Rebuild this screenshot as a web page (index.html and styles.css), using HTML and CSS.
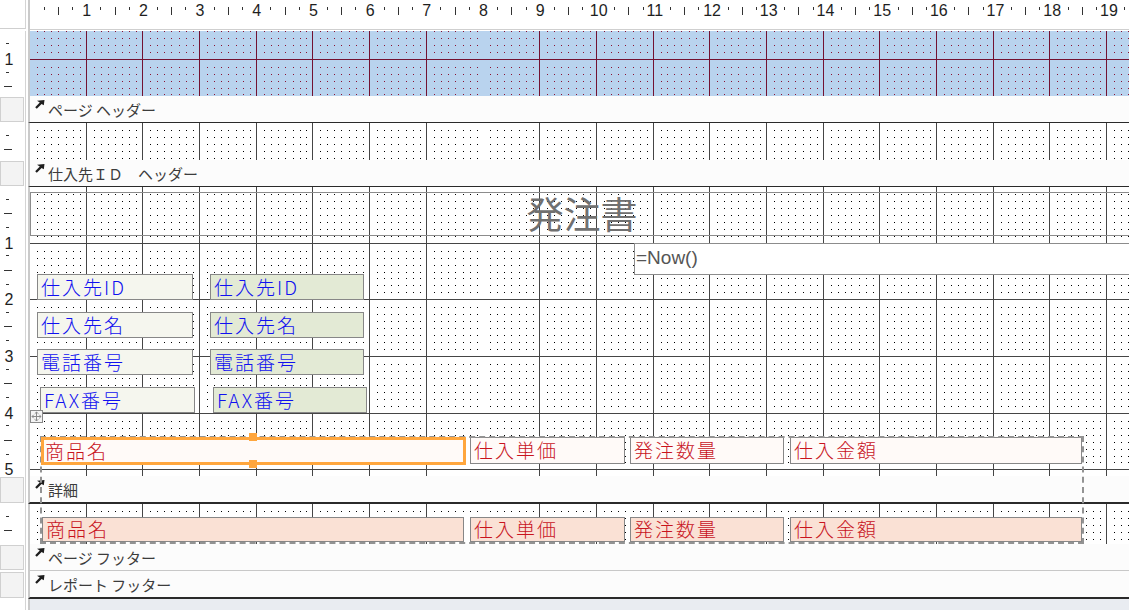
FILE: index.html
```html
<!DOCTYPE html>
<html lang="ja">
<head>
    <meta charset="UTF-8">
    <title>発注書 - デザイン ビュー</title>
    <link rel="stylesheet" href="styles.css">
</head>
<body>

<div class="designer">

    <!-- horizontal ruler -->
    <div class="row top">
        <div class="gut corner"></div>
        <div class="sec">
            <div class="hruler">
                <div class="cm"><span class="q"></span><span class="q s"></span><span class="q m"></span><span class="q s"></span></div>
                <div class="cm"><span class="q n">1</span><span class="q s"></span><span class="q m"></span><span class="q s"></span></div>
                <div class="cm"><span class="q n">2</span><span class="q s"></span><span class="q m"></span><span class="q s"></span></div>
                <div class="cm"><span class="q n">3</span><span class="q s"></span><span class="q m"></span><span class="q s"></span></div>
                <div class="cm"><span class="q n">4</span><span class="q s"></span><span class="q m"></span><span class="q s"></span></div>
                <div class="cm"><span class="q n">5</span><span class="q s"></span><span class="q m"></span><span class="q s"></span></div>
                <div class="cm"><span class="q n">6</span><span class="q s"></span><span class="q m"></span><span class="q s"></span></div>
                <div class="cm"><span class="q n">7</span><span class="q s"></span><span class="q m"></span><span class="q s"></span></div>
                <div class="cm"><span class="q n">8</span><span class="q s"></span><span class="q m"></span><span class="q s"></span></div>
                <div class="cm"><span class="q n">9</span><span class="q s"></span><span class="q m"></span><span class="q s"></span></div>
                <div class="cm"><span class="q n">10</span><span class="q s"></span><span class="q m"></span><span class="q s"></span></div>
                <div class="cm"><span class="q n">11</span><span class="q s"></span><span class="q m"></span><span class="q s"></span></div>
                <div class="cm"><span class="q n">12</span><span class="q s"></span><span class="q m"></span><span class="q s"></span></div>
                <div class="cm"><span class="q n">13</span><span class="q s"></span><span class="q m"></span><span class="q s"></span></div>
                <div class="cm"><span class="q n">14</span><span class="q s"></span><span class="q m"></span><span class="q s"></span></div>
                <div class="cm"><span class="q n">15</span><span class="q s"></span><span class="q m"></span><span class="q s"></span></div>
                <div class="cm"><span class="q n">16</span><span class="q s"></span><span class="q m"></span><span class="q s"></span></div>
                <div class="cm"><span class="q n">17</span><span class="q s"></span><span class="q m"></span><span class="q s"></span></div>
                <div class="cm"><span class="q n">18</span><span class="q s"></span><span class="q m"></span><span class="q s"></span></div>
                <div class="cm"><span class="q n">19</span><span class="q s"></span><span class="q m"></span><span class="q s"></span></div>
            </div>
        </div>
    </div>

    <!-- report header (selected section) -->
    <div class="row r-rh">
        <div class="gut">
            <div class="vr vr-rh">
                <span class="vq s"></span><span class="vq n">1</span><span class="vq s"></span><span class="vq m"></span>
            </div>
        </div>
        <div class="sec grid grid-sel"></div>
    </div>

    <!-- page header -->
    <div class="row bar">
        <div class="gut"><div class="gbox"></div></div>
        <div class="sec band edge-dark">
            <svg class="chev" width="10" height="9" viewBox="0 0 10 9"><path d="M2 0.8 9.5 0 8.8 5.2 6.6 4 1.8 8.8 0.2 7.2 4.8 2.6Z" fill="#1e1e1e"/></svg>
            <span>ページ ヘッダー</span>
        </div>
    </div>
    <div class="row r-ph">
        <div class="gut">
            <div class="vr">
                <span class="vq s"></span><span class="vq m"></span>
            </div>
        </div>
        <div class="sec grid"></div>
    </div>

    <!-- group header -->
    <div class="row bar">
        <div class="gut"><div class="gbox"></div></div>
        <div class="sec band edge-dark">
            <svg class="chev" width="10" height="9" viewBox="0 0 10 9"><path d="M2 0.8 9.5 0 8.8 5.2 6.6 4 1.8 8.8 0.2 7.2 4.8 2.6Z" fill="#1e1e1e"/></svg>
            <span>仕入先ＩＤ　ヘッダー</span>
        </div>
    </div>
    <div class="row r-gh">
        <div class="gut">
            <div class="vr">
                <span class="vq s"></span><span class="vq m"></span><span class="vq s"></span><span class="vq n">1</span>
                <span class="vq s"></span><span class="vq m"></span><span class="vq s"></span><span class="vq n">2</span>
                <span class="vq s"></span><span class="vq m"></span><span class="vq s"></span><span class="vq n">3</span>
                <span class="vq s"></span><span class="vq m"></span><span class="vq s"></span><span class="vq n">4</span>
                <span class="vq s"></span><span class="vq m"></span><span class="vq s"></span><span class="vq n">5</span>
            </div>
        </div>
        <div class="sec grid">
            <div class="title">発注書</div>
            <div class="now">=Now()</div>

            <div class="ctl lbl at-l1">仕入先ID</div>
            <div class="ctl txt at-t1">仕入先ID</div>
            <div class="ctl lbl at-l2">仕入先名</div>
            <div class="ctl txt at-t2">仕入先名</div>
            <div class="ctl lbl at-l3">電話番号</div>
            <div class="ctl txt at-t3">電話番号</div>
            <div class="ctl lbl at-l4">FAX番号</div>
            <div class="ctl txt at-t4">FAX番号</div>

            <div class="grip">
                <svg width="11" height="11" viewBox="0 0 11 11"><path d="M5.5 1v9M1 5.5h9M3.8 2.7 5.5 1 7.2 2.7M3.8 8.3 5.5 10 7.2 8.3M2.7 3.8 1 5.5 2.7 7.2M8.3 3.8 10 5.5 8.3 7.2" stroke="#8a8a8a" fill="none"/></svg>
            </div>

            <div class="ctl hd picked at-h1">商品名</div>
            <div class="hdl hdl-top"></div>
            <div class="hdl hdl-bot"></div>
            <div class="ctl hd at-h2">仕入単価</div>
            <div class="ctl hd at-h3">発注数量</div>
            <div class="ctl hd at-h4">仕入金額</div>
        </div>
    </div>

    <!-- detail -->
    <div class="row bar bar-thick">
        <div class="gut"><div class="gbox"></div></div>
        <div class="sec band edge-thick">
            <svg class="chev" width="10" height="9" viewBox="0 0 10 9"><path d="M2 0.8 9.5 0 8.8 5.2 6.6 4 1.8 8.8 0.2 7.2 4.8 2.6Z" fill="#1e1e1e"/></svg>
            <span>詳細</span>
        </div>
    </div>
    <div class="row r-dt">
        <div class="gut">
            <div class="vr">
                <span class="vq s"></span><span class="vq m"></span>
            </div>
        </div>
        <div class="sec grid">
            <div class="ctl dt at-d1">商品名</div>
            <div class="ctl dt at-d2">仕入単価</div>
            <div class="ctl dt at-d3">発注数量</div>
            <div class="ctl dt at-d4">仕入金額</div>
        </div>
    </div>

    <!-- page footer -->
    <div class="row bar">
        <div class="gut"><div class="gbox"></div></div>
        <div class="sec band edge-light">
            <svg class="chev" width="10" height="9" viewBox="0 0 10 9"><path d="M2 0.8 9.5 0 8.8 5.2 6.6 4 1.8 8.8 0.2 7.2 4.8 2.6Z" fill="#1e1e1e"/></svg>
            <span>ページ フッター</span>
        </div>
    </div>

    <!-- report footer -->
    <div class="row bar bar-thick">
        <div class="gut"><div class="gbox"></div></div>
        <div class="sec band edge-thick">
            <svg class="chev" width="10" height="9" viewBox="0 0 10 9"><path d="M2 0.8 9.5 0 8.8 5.2 6.6 4 1.8 8.8 0.2 7.2 4.8 2.6Z" fill="#1e1e1e"/></svg>
            <span>レポート フッター</span>
        </div>
    </div>

    <div class="row rest">
        <div class="gut"></div>
        <div class="sec empty"></div>
    </div>

    <!-- control layout outline (spans group header and detail) -->
    <div class="layout-box"></div>
</div>

</body>
</html>
```

FILE: styles.css
```css
html, body {
    margin: 0;
    padding: 0;
    background: #fff;
    overflow: hidden;
}

.designer {
    position: relative;
    width: 1129px;
    height: 610px;
    display: flex;
    flex-direction: column;
    font-family: "Noto Sans CJK JP", sans-serif;
}

.row {
    display: flex;
    flex: none;
}

/* left ruler column */
.gut {
    flex: none;
    width: 25px;
    border-right: 1px solid #d4d4d4;
    margin-right: 2px;
    position: relative;
}

.sec {
    flex: 1;
    min-width: 0;
    border-left: 2px solid #cacaca;
    position: relative;
    overflow: hidden;
}

/* top ruler */
.top {
    height: 31px;
}

.corner {
    align-self: flex-start;
    height: 28px;
    border-bottom: 1px solid #cfcfcf;
}

.hruler {
    display: flex;
    height: 29px;
    margin-left: -7.09px;
    border-bottom: 1px solid #cfcfcf;
}

.cm {
    flex: none;
    width: 56.7px;
    display: flex;
}

.q {
    flex: 0 0 14.175px;
    display: flex;
    justify-content: center;
}

.q.s::before,
.q.m::before {
    content: "";
    width: 1px;
    margin-top: 7px;
    background: #333;
}

.q.s::before { height: 3px; }
.q.m::before { height: 8px; }

.q.n {
    font: 16px/22px "Liberation Sans", Arial, sans-serif;
    color: #1e1e1e;
}

/* vertical ruler */
.vr {
    display: flex;
    flex-direction: column;
    padding-top: 7.09px;
}

.vr-rh {
    padding-top: 7.7px;
}

.vq {
    flex: 0 0 14.175px;
    display: flex;
    align-items: center;
    padding-left: 4px;
}

.vq.s::before,
.vq.m::before {
    content: "";
    height: 1px;
    margin-bottom: 4px;
    background: #333;
}

.vq.s::before { width: 3px; margin-left: 1.5px; }
.vq.m::before { width: 8px; }

.vq.n {
    width: 10px;
    justify-content: center;
    font: 16px/14px "Liberation Sans", Arial, sans-serif;
    color: #1e1e1e;
}

/* section heights */
.r-rh { height: 65px; }
.r-ph { height: 37px; }
.r-gh { height: 289px; }
.r-dt { height: 40px; }
.bar { height: 27px; }
.bar-thick { height: 28px; }
.rest { flex: 1; }

/* section bars */
.gbox {
    margin-top: 1px;
    height: calc(100% - 2px);
    box-sizing: border-box;
    width: 24px;
    border: 1px solid #d0d0d0;
    background: #f3f3f3;
}

.band {
    display: flex;
    align-items: center;
    background: #fcfcfc;
    font-size: 15px;
    color: #3c3c3c;
    box-sizing: border-box;
    white-space: nowrap;
}

.band .chev {
    align-self: flex-start;
    margin: 4px 3px 0 5px;
    flex: none;
}

.edge-dark { border-bottom: 1px solid #2a2a2a; }
.edge-thick { border-bottom: 2px solid #2a2a2a; }
.edge-light { border-bottom: 1px solid #c8c8c8; }

.empty {
    background: #e9ecf1;
}

/* design grid: one tile is one centimetre */
.grid {
    background-color: #fff;
    background-image: url("data:image/svg+xml,%3Csvg xmlns='http://www.w3.org/2000/svg' width='56.7' height='56.7' shape-rendering='crispEdges'%3E%3Cpath d='M7 7.5h50M7 14.5h50M7 21.5h50M7 28.5h50M7 35.5h50M7 42.5h50M7 49.5h50' stroke='%23000' stroke-dasharray='1 6.09'/%3E%3Cpath d='M56.5 0v57M0 56.5h57' stroke='%23454545'/%3E%3C/svg%3E");
    background-size: 56.7px 56.7px;
}

.grid-sel {
    background-color: #b9d3ee;
    background-image: url("data:image/svg+xml,%3Csvg xmlns='http://www.w3.org/2000/svg' width='56.7' height='56.7' shape-rendering='crispEdges'%3E%3Cpath d='M7 7.5h50M7 14.5h50M7 21.5h50M7 28.5h50M7 35.5h50M7 42.5h50M7 49.5h50' stroke='%238a1030' stroke-dasharray='1 6.09'/%3E%3Cpath d='M56.5 0v57M0 56.5h57' stroke='%23731232'/%3E%3C/svg%3E");
    background-position: 0 -28px;
}

/* controls on the design surface */
.title {
    position: absolute;
    left: 0;
    top: 5px;
    width: 1104px;
    height: 44px;
    box-sizing: border-box;
    border: 1px solid #8c8c8c;
    text-align: center;
    font-size: 37px;
    line-height: 40px;
    font-weight: 400;
    color: #707070;
}

.now {
    position: absolute;
    left: 604px;
    top: 56px;
    width: 540px;
    height: 32px;
    box-sizing: border-box;
    border: 1px solid #8c8c8c;
    background: #fff;
    padding-left: 1px;
    font: 19px/28px "Liberation Sans", Arial, sans-serif;
    color: #555;
}

.ctl {
    position: absolute;
    box-sizing: border-box;
    height: 26px;
    border: 1px solid #878787;
    padding-left: 3px;
    font-size: 19px;
    font-weight: 300;
    line-height: 23px;
    letter-spacing: 2px;
    white-space: nowrap;
}

.lbl { background: #f5f6ee; color: #1010f0; }
.txt { background: #e3ead5; color: #1010f0; }
.hd  { background: #fffaf8; color: #c8141e; height: 27px; line-height: 24px; }
.dt  { background: #fae1d5; color: #c8141e; height: 25px; line-height: 22px; }

.at-l1 { left: 7px;   top: 87px;  width: 156px; }
.at-t1 { left: 180px; top: 87px;  width: 154px; }
.at-l2 { left: 7px;   top: 125px; width: 156px; }
.at-t2 { left: 180px; top: 125px; width: 154px; }
.at-l3 { left: 7px;   top: 162px; width: 156px; }
.at-t3 { left: 180px; top: 162px; width: 154px; }
.at-l4 { left: 10px;  top: 200px; width: 155px; }
.at-t4 { left: 183px; top: 200px; width: 154px; }

.at-h1 { left: 11px;  top: 250px; width: 425px; }
.at-h2 { left: 440px; top: 250px; width: 155px; }
.at-h3 { left: 600px; top: 250px; width: 154px; }
.at-h4 { left: 760px; top: 250px; width: 292px; }

.at-d1 { left: 12px;  top: 13px; width: 422px; }
.at-d2 { left: 440px; top: 13px; width: 155px; }
.at-d3 { left: 600px; top: 13px; width: 154px; }
.at-d4 { left: 760px; top: 13px; width: 292px; }

/* selected control */
.picked {
    border: 3px solid #ffa63d;
    height: 28px;
    line-height: 21px;
    padding-left: 1px;
    z-index: 6;
}

.hdl {
    position: absolute;
    left: 219px;
    width: 8px;
    height: 8px;
    background: #ffa63d;
    z-index: 7;
}

.hdl-top { top: 246px; }
.hdl-bot { top: 273px; }

.grip {
    position: absolute;
    left: 0;
    top: 223px;
    width: 13px;
    height: 13px;
    box-sizing: border-box;
    border: 1px solid #8a8a8a;
    background: #f4f4f4;
    display: flex;
    align-items: center;
    justify-content: center;
}

.layout-box {
    position: absolute;
    left: 40px;
    top: 436px;
    width: 1044px;
    height: 108px;
    box-sizing: border-box;
    border: 2px dashed #939393;
    z-index: 5;
    pointer-events: none;
}
```
